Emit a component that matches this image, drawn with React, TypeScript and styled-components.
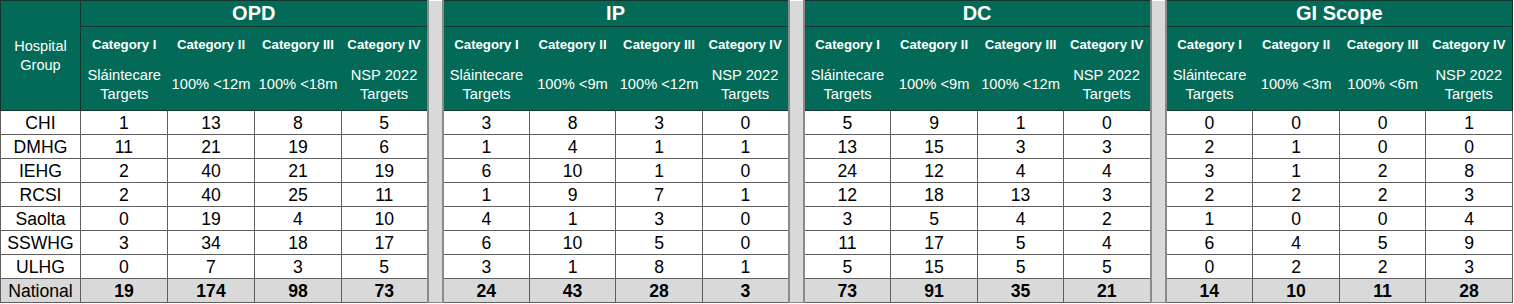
import React from 'react';
import styled, { createGlobalStyle } from 'styled-components';

const GlobalStyle = createGlobalStyle`
  body {
    margin: 0;
    background: #fff;
    font-family: 'Liberation Sans', Arial, sans-serif;
  }
`;

const GREEN = '#026a56';
const HEAD_LINE = '#12352c';
const BODY_LINE = '#5f5f5f';

const Sheet = styled.table`
  width: 1512px;
  table-layout: fixed;
  border-collapse: collapse;
  color: #000;
  font-family: 'Liberation Sans', Arial, sans-serif;
`;

const HospHead = styled.th`
  background: ${GREEN};
  color: #fff;
  font-size: 14.5px;
  font-weight: 400;
  line-height: 19px;
  border: 1px solid ${HEAD_LINE};
  vertical-align: middle;
  padding: 0 2px;
`;

const GroupHead = styled.th`
  background: ${GREEN};
  color: #fff;
  font-size: 20px;
  font-weight: 700;
  height: 25px;
  padding: 0;
  border: 1px solid ${HEAD_LINE};
`;

const CatHead = styled.th<{ $edge?: 'left' | 'right' }>`
  background: ${GREEN};
  color: #fff;
  font-size: 13.2px;
  font-weight: 700;
  height: 34px;
  padding: 0;
  white-space: nowrap;
  border-left: ${(p) => (p.$edge === 'left' ? `1px solid ${HEAD_LINE}` : 'none')};
  border-right: ${(p) => (p.$edge === 'right' ? `1px solid ${HEAD_LINE}` : 'none')};
`;

const TargetHead = styled.th<{ $edge?: 'left' | 'right' }>`
  background: ${GREEN};
  color: #fff;
  font-size: 14.7px;
  font-weight: 400;
  line-height: 19px;
  height: 47px;
  padding: 0 0 2px;
  white-space: nowrap;
  border-bottom: 1px solid ${HEAD_LINE};
  border-left: ${(p) => (p.$edge === 'left' ? `1px solid ${HEAD_LINE}` : 'none')};
  border-right: ${(p) => (p.$edge === 'right' ? `1px solid ${HEAD_LINE}` : 'none')};
`;

const Spacer = styled.td`
  background: #d9d9d9;
  padding: 0;
  border-left: 2px solid #8a8a8a;
  border-right: 2px solid #8a8a8a;
  border-bottom: 1px solid #8a8a8a;
`;

const Cell = styled.td<{ $total?: boolean; $label?: boolean }>`
  height: 23px;
  padding: 0;
  text-align: center;
  font-size: 17.6px;
  line-height: 20px;
  font-weight: ${(p) => (p.$total && !p.$label ? 700 : 400)};
  background: ${(p) => (p.$total ? '#d9d9d9' : '#fff')};
  border: 1px solid ${BODY_LINE};
`;

type Group = {
  name: string;
  targets: string[][];
  data: number[][];
  total: number[];
};

const cats = ['Category I', 'Category II', 'Category III', 'Category IV'];
const hospitals = ['CHI', 'DMHG', 'IEHG', 'RCSI', 'Saolta', 'SSWHG', 'ULHG'];

const groups: Group[] = [
  {
    name: 'OPD',
    targets: [['Sláintecare', 'Targets'], ['100% <12m'], ['100% <18m'], ['NSP 2022', 'Targets']],
    data: [
      [1, 13, 8, 5],
      [11, 21, 19, 6],
      [2, 40, 21, 19],
      [2, 40, 25, 11],
      [0, 19, 4, 10],
      [3, 34, 18, 17],
      [0, 7, 3, 5],
    ],
    total: [19, 174, 98, 73],
  },
  {
    name: 'IP',
    targets: [['Sláintecare', 'Targets'], ['100% <9m'], ['100% <12m'], ['NSP 2022', 'Targets']],
    data: [
      [3, 8, 3, 0],
      [1, 4, 1, 1],
      [6, 10, 1, 0],
      [1, 9, 7, 1],
      [4, 1, 3, 0],
      [6, 10, 5, 0],
      [3, 1, 8, 1],
    ],
    total: [24, 43, 28, 3],
  },
  {
    name: 'DC',
    targets: [['Sláintecare', 'Targets'], ['100% <9m'], ['100% <12m'], ['NSP 2022', 'Targets']],
    data: [
      [5, 9, 1, 0],
      [13, 15, 3, 3],
      [24, 12, 4, 4],
      [12, 18, 13, 3],
      [3, 5, 4, 2],
      [11, 17, 5, 4],
      [5, 15, 5, 5],
    ],
    total: [73, 91, 35, 21],
  },
  {
    name: 'GI Scope',
    targets: [['Sláintecare', 'Targets'], ['100% <3m'], ['100% <6m'], ['NSP 2022', 'Targets']],
    data: [
      [0, 0, 0, 1],
      [2, 1, 0, 0],
      [3, 1, 2, 8],
      [2, 2, 2, 3],
      [1, 0, 0, 4],
      [6, 4, 5, 9],
      [0, 2, 2, 3],
    ],
    total: [14, 10, 11, 28],
  },
];

const colWidths = [
  [87, 87, 87, 86],
  [87, 86, 87, 86],
  [87, 87, 86, 87],
  [87, 87, 86, 87],
];

const edgeOf = (i: number) => (i === 0 ? 'left' : i === 3 ? 'right' : undefined);

const App = () => {
  return (
    <>
      <GlobalStyle />
      <Sheet>
        <colgroup>
          <col style={{ width: 80 }} />
          {groups.map((g, gi) => (
            <React.Fragment key={g.name}>
              {gi > 0 && <col style={{ width: 15 }} />}
              {colWidths[gi].map((w, ci) => (
                <col key={ci} style={{ width: w }} />
              ))}
            </React.Fragment>
          ))}
        </colgroup>
        <tbody>
          <tr>
            <HospHead rowSpan={3}>
              Hospital
              <br />
              Group
            </HospHead>
            {groups.map((g, gi) => (
              <React.Fragment key={g.name}>
                {gi > 0 && <Spacer rowSpan={11} />}
                <GroupHead colSpan={4}>{g.name}</GroupHead>
              </React.Fragment>
            ))}
          </tr>
          <tr>
            {groups.map((g) =>
              cats.map((c, ci) => (
                <CatHead key={g.name + c} $edge={edgeOf(ci)}>
                  {c}
                </CatHead>
              ))
            )}
          </tr>
          <tr>
            {groups.map((g) =>
              g.targets.map((t, ti) => (
                <TargetHead key={g.name + ti} $edge={edgeOf(ti)}>
                  {t.map((line, li) => (
                    <React.Fragment key={li}>
                      {li > 0 && <br />}
                      {line}
                    </React.Fragment>
                  ))}
                </TargetHead>
              ))
            )}
          </tr>
          {hospitals.map((h, hi) => (
            <tr key={h}>
              <Cell $label>{h}</Cell>
              {groups.map((g) =>
                g.data[hi].map((v, vi) => <Cell key={g.name + vi}>{v}</Cell>)
              )}
            </tr>
          ))}
          <tr>
            <Cell $total $label>
              National
            </Cell>
            {groups.map((g) =>
              g.total.map((v, vi) => (
                <Cell key={g.name + vi} $total>
                  {v}
                </Cell>
              ))
            )}
          </tr>
        </tbody>
      </Sheet>
    </>
  );
};

export default App;
